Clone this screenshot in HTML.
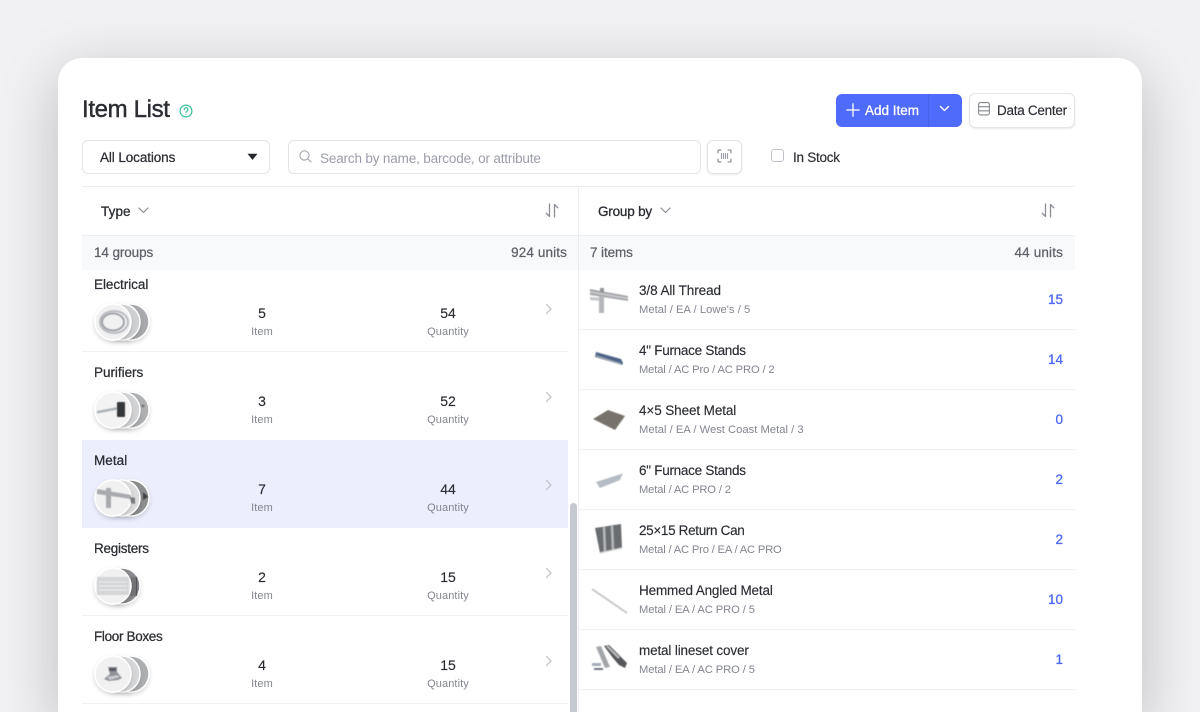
<!DOCTYPE html>
<html lang="en">
<head>
<meta charset="utf-8">
<title>Item List</title>
<style>
html,body{margin:0;padding:0;width:1200px;height:712px;overflow:hidden}
body{background:#f1f1f3;font-family:"Liberation Sans",sans-serif;color:#2b2d33}
#w{position:absolute;left:0;top:0;width:1200px;height:712px;overflow:hidden}
.card{position:absolute;left:58px;top:58px;width:1084px;height:654px;background:#fff;border-radius:24px 24px 0 0;box-shadow:0 16px 60px rgba(0,0,0,.22)}
.a{position:absolute;white-space:nowrap}
.t{position:absolute;white-space:nowrap;line-height:18px;font-size:13.5px;-webkit-text-stroke:.15px currentColor}
.n{font-size:14px}
.c{transform:translateX(-50%)}
.lbl{font-size:11px;color:#83858f;-webkit-text-stroke:0;letter-spacing:.1px}
.sub{font-size:11.2px;color:#83858f;-webkit-text-stroke:0;letter-spacing:-.1px}
.ti{letter-spacing:-.15px}
.num{color:#4d68f5;font-size:13.5px;-webkit-text-stroke:.3px #4d68f5;right:137px}
.sum{color:#5f616b;letter-spacing:-.1px;-webkit-text-stroke:.25px #5f616b;top:244px}
.box{position:absolute;box-sizing:border-box;background:#fff;border:1px solid #e3e4e8;border-radius:6px}
.ln{position:absolute;height:1px;background:#f0f1f3}
svg{position:absolute;overflow:visible}
.ic{fill:none;stroke-linecap:round;stroke-linejoin:round}
</style>
</head>
<body>
<div id="w">
<div class="card"></div>

<div class="t" style="left:82px;top:96px;font-size:24px;line-height:28px;letter-spacing:-.35px;-webkit-text-stroke:.45px #2b2d33">Item List</div>
<svg style="left:179px;top:104px" width="14" height="14" viewBox="0 0 14 14" class="ic" stroke="#3dbf9f" stroke-width="1.2"><circle cx="7" cy="7" r="5.9"/><path d="M5.3 5.6a1.8 1.8 0 1 1 2.6 1.5c-.6.3-.9.6-.9 1.2"/><path d="M7 10.2v.1"/></svg>

<!-- Buttons -->
<div class="a" style="left:836px;top:94px;width:126px;height:33px;background:#4f6bfb;border-radius:6px"></div>
<div class="a" style="left:928px;top:94px;width:1px;height:33px;background:#4661e8"></div>
<svg style="left:846px;top:103px" width="14" height="14" viewBox="0 0 14 14" class="ic" stroke="#fff" stroke-width="1.3"><path d="M7 .8v12.4M.8 7h12.4"/></svg>
<div class="t" style="left:865px;top:102px;color:#fff;-webkit-text-stroke:.3px #fff">Add Item</div>
<svg style="left:939px;top:105px" width="11" height="8" viewBox="0 0 11 8" class="ic" stroke="#fff" stroke-width="1.4"><path d="M1.5 1.5l4 4 4-4"/></svg>

<div class="box" style="left:969px;top:93px;width:106px;height:35px;box-shadow:0 1px 2px rgba(0,0,0,.08)"></div>
<svg style="left:978px;top:102px" width="12" height="14" viewBox="0 0 12 14" class="ic" stroke="#85878f" stroke-width="1.1"><rect x=".6" y=".6" width="10.8" height="12.3" rx="1.8"/><path d="M.6 4.7h10.8M.6 8.8h10.8"/></svg>
<div class="t" style="left:997px;top:102px;letter-spacing:-.27px">Data Center</div>

<!-- Filters -->
<div class="box" style="left:82px;top:140px;width:188px;height:34px"></div>
<div class="t" style="left:100px;top:149px;letter-spacing:-.1px;-webkit-text-stroke:.25px #2b2d33">All Locations</div>
<svg style="left:247px;top:153px" width="11" height="8" viewBox="0 0 11 8"><path d="M.5.8h10L5.9 6.500a.5.5 0 0 1-.8 0z" fill="#26282d"/></svg>

<div class="box" style="left:288px;top:140px;width:413px;height:34px"></div>
<svg style="left:299px;top:150px" width="13" height="13" viewBox="0 0 15 15" class="ic" stroke="#a7a9b2" stroke-width="1.3"><circle cx="6.3" cy="6.3" r="5.3"/><path d="M10.2 10.2l3.6 3.6"/></svg>
<div class="t" style="left:320px;top:150px;color:#9b9daa;letter-spacing:-.16px;-webkit-text-stroke:0">Search by name, barcode, or attribute</div>

<div class="box" style="left:707px;top:140px;width:35px;height:34px;box-shadow:0 1px 2px rgba(0,0,0,.08)"></div>
<svg style="left:717px;top:149px" width="15" height="14" viewBox="0 0 15 14" class="ic" stroke="#777983" stroke-width="1"><path d="M1 4V2a1 1 0 0 1 1-1h2M11 1h2a1 1 0 0 1 1 1v2M14 10v2a1 1 0 0 1-1 1h-2M4 13H2a1 1 0 0 1-1-1v-2"/><path d="M4.5 4.5v5M6.5 4.5v5M8.5 4.5v5M10.5 4.5v5" stroke-width="1.1" stroke="#9a9ca5"/></svg>

<div class="a" style="left:771px;top:149px;width:13px;height:13px;box-sizing:border-box;border:1px solid #bfc1c9;border-radius:3px;background:#fff"></div>
<div class="t" style="left:793px;top:149px;letter-spacing:-.25px">In Stock</div>

<!-- Panels -->
<div class="ln" style="left:82px;top:186px;width:993px;background:#edeef1"></div>
<div class="a" style="left:82px;top:236px;width:993px;height:34px;background:#f8f9fa"></div>
<div class="ln" style="left:82px;top:235px;width:993px;background:#eeeff2"></div>
<div class="a" style="left:578px;top:187px;width:1px;height:525px;background:#ebecef"></div>

<div class="t" style="left:101px;top:203px;letter-spacing:.1px;-webkit-text-stroke:.3px #2b2d33">Type</div>
<svg style="left:138px;top:207px" width="11" height="7" viewBox="0 0 11 7" class="ic" stroke="#8c8e98" stroke-width="1.2"><path d="M1 1l4.5 4.5L10 1"/></svg>
<svg style="left:545px;top:203px" width="14" height="15" viewBox="0 0 14 15" class="ic" stroke="#8a8c95" stroke-width="1.3"><path d="M4.5 1v12.5L1.2 10.2"/><path d="M9.5 14V1.5l3.3 3.3"/></svg>

<div class="t" style="left:598px;top:203px;letter-spacing:-.2px;-webkit-text-stroke:.3px #2b2d33">Group by</div>
<svg style="left:660px;top:207px" width="11" height="7" viewBox="0 0 11 7" class="ic" stroke="#8c8e98" stroke-width="1.2"><path d="M1 1l4.5 4.5L10 1"/></svg>
<svg style="left:1041px;top:203px" width="14" height="15" viewBox="0 0 14 15" class="ic" stroke="#8a8c95" stroke-width="1.3"><path d="M4.5 1v12.5L1.2 10.2"/><path d="M9.5 14V1.5l3.3 3.3"/></svg>

<div class="t sum" style="left:94px">14 groups</div>
<div class="t sum" style="right:633px;letter-spacing:.12px">924 units</div>
<div class="t sum" style="left:590px">7 items</div>
<div class="t sum" style="right:137px;letter-spacing:.15px">44 units</div>

<!-- Left rows -->
<div class="a" style="left:82px;top:440px;width:486px;height:88px;background:#eceefe"></div>
<div class="ln" style="left:82px;top:351px;width:486px"></div>
<div class="ln" style="left:82px;top:615px;width:486px"></div>
<div class="ln" style="left:82px;top:703px;width:486px"></div>
<div class="a" style="left:570px;top:503px;width:7px;height:209px;background:#c7c9d1;border-radius:4px 4px 0 0"></div>

<svg width="1200" height="712" style="left:0;top:0" viewBox="0 0 1200 712">
<defs>
<filter id="sh" x="-30%" y="-30%" width="160%" height="170%"><feDropShadow dx="0" dy="2" stdDeviation="2" flood-color="#000" flood-opacity=".16"/></filter>
<filter id="b" x="-20%" y="-20%" width="140%" height="140%"><feGaussianBlur stdDeviation=".5"/></filter>
</defs>
<!-- Electrical -->
<g filter="url(#sh)"><circle cx="131" cy="322" r="18" fill="#a9aaad" stroke="#fff" stroke-width="1.5"/></g>
<g filter="url(#sh)"><circle cx="122" cy="322" r="18" fill="#d0d1d3" stroke="#fff" stroke-width="1.5"/></g>
<g filter="url(#sh)"><circle cx="113" cy="322" r="18" fill="#f1f1f2" stroke="#fff" stroke-width="1.5"/></g>
<g filter="url(#b)" fill="none" stroke="#9a9ca3" stroke-width="1.8"><ellipse cx="113" cy="322" rx="11" ry="8.5"/><ellipse cx="114" cy="322" rx="14" ry="11" stroke="#b5b7bc"/></g>
<!-- Purifiers -->
<g filter="url(#sh)"><circle cx="131" cy="410" r="18" fill="#b0b1b3" stroke="#fff" stroke-width="1.5"/></g>
<g filter="url(#sh)"><circle cx="122" cy="410" r="18" fill="#d2d3d4" stroke="#fff" stroke-width="1.5"/></g>
<g filter="url(#sh)"><circle cx="113" cy="410" r="18" fill="#f3f3f4" stroke="#fff" stroke-width="1.5"/></g>
<g filter="url(#b)"><path d="M97 411l21-4v2.500l-21 4z" fill="#a9b0b6"/><rect x="117" y="402" width="8" height="15" rx="1" fill="#36373b"/></g>
<circle cx="143" cy="406" r="1.5" fill="#77787b" filter="url(#b)"/>
<!-- Metal -->
<g filter="url(#sh)"><circle cx="131" cy="498" r="18" fill="#8d8e90" stroke="#fff" stroke-width="1.5"/></g>
<path d="M143 492l5 5-5 3z" fill="#3e3f42" filter="url(#b)"/>
<g filter="url(#sh)"><circle cx="122" cy="498" r="18" fill="#dcdcdd" stroke="#fff" stroke-width="1.5"/></g>
<g filter="url(#sh)"><circle cx="113" cy="498" r="18" fill="#f1f1f2" stroke="#fff" stroke-width="1.5"/></g>
<g filter="url(#b)" fill="#a8aaad"><path d="M97 489l34 6v4l-34-5z"/><rect x="106" y="488" width="5" height="20"/><path d="M130 497l5 1v6l-4-1z" fill="#77787c"/></g>
<!-- Registers -->
<g filter="url(#sh)"><circle cx="122" cy="586" r="18" fill="#8a8b8e" stroke="#fff" stroke-width="1.5"/></g>
<g filter="url(#b)"><rect x="130" y="577" width="7" height="19" fill="#3a3b3f"/><path d="M131 577v19M133 577v19M135 577v19" stroke="#c0c0c0" stroke-width=".7"/></g>
<g filter="url(#sh)"><circle cx="113" cy="586" r="18" fill="#f1f1f2" stroke="#fff" stroke-width="1.5"/></g>
<g filter="url(#b)"><rect x="97" y="577" width="32" height="18" rx="1" fill="#d4d5d7"/><path d="M99 582h28M99 586h28M99 590h28" stroke="#eeeeef" stroke-width="1"/></g>
<!-- Floor Boxes -->
<g filter="url(#sh)"><circle cx="131" cy="674" r="18" fill="#adaeb0" stroke="#fff" stroke-width="1.5"/></g>
<g filter="url(#sh)"><circle cx="122" cy="674" r="18" fill="#d6d7d8" stroke="#fff" stroke-width="1.5"/></g>
<g filter="url(#sh)"><circle cx="113" cy="674" r="18" fill="#f1f1f2" stroke="#fff" stroke-width="1.5"/></g>
<g filter="url(#b)"><path d="M108 667h9v5l5 6-4 2-9 1-5-2 6-5z" fill="#8e9096"/><path d="M107 677l10-2 3 2-10 3z" fill="#c9cbd0"/><rect x="109" y="668" width="7" height="3" fill="#56585e"/></g>

<!-- Right thumbnails -->
<g filter="url(#b)">
<path d="M590 289l38 7v5l-38-6z" fill="#a6a8ab"/><path d="M590 292l38 6.500" stroke="#d8d9db" stroke-width="1"/>
<path d="M590 297l12 1v3l-12-1z" fill="#c6c7c9"/>
<path d="M600 288h4v4h-4z" fill="#8f9194"/><path d="M599 296h5v17h-5z" fill="#b4b6b9"/>
<path d="M596 352l25 7 2 4-1 2-27-8z" fill="#4e6488"/><path d="M596 356l25 8" stroke="#a7adb6" stroke-width="1.2"/>
<path d="M593 419l15-9 17 6-10 14z" fill="#77736c"/>
<path d="M596 482l25-8 2-1-3 7-20 8z" fill="#b6bcc3"/>
<path d="M595 528l26-4 1 24-22 5z" fill="#6b6d70"/><path d="M604 527l1 25M612 526l1 24" stroke="#b4b6b9" stroke-width="2.500"/><path d="M600 553l22-5" stroke="#d4d5d7" stroke-width="1.2"/>
<path d="M592 589l35 24" stroke="#c3c5c4" stroke-width="1.7" fill="none"/>
<path d="M596 647l5-1 9 21-5 1z" fill="#a4a7aa"/><path d="M604 646l5-1 18 18-2 5-6-3-6-7z" fill="#55565a"/><path d="M607 646l12 12" stroke="#b9bbbd" stroke-width="2" fill="none"/>
<path d="M592 663h9v3h-9z" fill="#a7adb8"/><path d="M594 668h9v2h-9z" fill="#6f7480"/>
</g>
</svg>

<div class="t ti" style="left:94px;top:276px;letter-spacing:-.05px;-webkit-text-stroke:.25px #2b2d33">Electrical</div>
<div class="t n c" style="left:262px;top:304px">5</div><div class="t c lbl" style="left:262px;top:323px">Item</div>
<div class="t n c" style="left:448px;top:304px">54</div><div class="t c lbl" style="left:448px;top:323px">Quantity</div>

<div class="t ti" style="left:94px;top:364px;letter-spacing:-.03px;-webkit-text-stroke:.25px #2b2d33">Purifiers</div>
<div class="t n c" style="left:262px;top:392px">3</div><div class="t c lbl" style="left:262px;top:411px">Item</div>
<div class="t n c" style="left:448px;top:392px">52</div><div class="t c lbl" style="left:448px;top:411px">Quantity</div>

<div class="t ti" style="left:94px;top:452px;letter-spacing:.05px;-webkit-text-stroke:.25px #2b2d33">Metal</div>
<div class="t n c" style="left:262px;top:480px">7</div><div class="t c lbl" style="left:262px;top:499px">Item</div>
<div class="t n c" style="left:448px;top:480px">44</div><div class="t c lbl" style="left:448px;top:499px">Quantity</div>

<div class="t ti" style="left:94px;top:540px;letter-spacing:-.26px;-webkit-text-stroke:.25px #2b2d33">Registers</div>
<div class="t n c" style="left:262px;top:568px">2</div><div class="t c lbl" style="left:262px;top:587px">Item</div>
<div class="t n c" style="left:448px;top:568px">15</div><div class="t c lbl" style="left:448px;top:587px">Quantity</div>

<div class="t ti" style="left:94px;top:628px;letter-spacing:-.33px;-webkit-text-stroke:.25px #2b2d33">Floor Boxes</div>
<div class="t n c" style="left:262px;top:656px">4</div><div class="t c lbl" style="left:262px;top:675px">Item</div>
<div class="t n c" style="left:448px;top:656px">15</div><div class="t c lbl" style="left:448px;top:675px">Quantity</div>

<svg style="left:545px;top:303px" width="8" height="12" viewBox="0 0 8 12" class="ic" stroke="#c3c5cc" stroke-width="1.3"><path d="M1.500 1.500l4.500 4.500-4.500 4.500"/></svg>
<svg style="left:545px;top:391px" width="8" height="12" viewBox="0 0 8 12" class="ic" stroke="#c3c5cc" stroke-width="1.3"><path d="M1.500 1.500l4.500 4.500-4.500 4.500"/></svg>
<svg style="left:545px;top:479px" width="8" height="12" viewBox="0 0 8 12" class="ic" stroke="#c3c5cc" stroke-width="1.3"><path d="M1.500 1.500l4.500 4.500-4.500 4.500"/></svg>
<svg style="left:545px;top:567px" width="8" height="12" viewBox="0 0 8 12" class="ic" stroke="#c3c5cc" stroke-width="1.3"><path d="M1.500 1.500l4.500 4.500-4.500 4.500"/></svg>
<svg style="left:545px;top:655px" width="8" height="12" viewBox="0 0 8 12" class="ic" stroke="#c3c5cc" stroke-width="1.3"><path d="M1.500 1.500l4.500 4.500-4.500 4.500"/></svg>

<!-- Right rows -->
<div class="ln" style="left:579px;top:329px;width:496px"></div>
<div class="ln" style="left:579px;top:389px;width:496px"></div>
<div class="ln" style="left:579px;top:449px;width:496px"></div>
<div class="ln" style="left:579px;top:509px;width:496px"></div>
<div class="ln" style="left:579px;top:569px;width:496px"></div>
<div class="ln" style="left:579px;top:629px;width:496px"></div>
<div class="ln" style="left:579px;top:689px;width:496px"></div>

<div class="t ti" style="left:639px;top:282px;letter-spacing:-.08px">3/8 All Thread</div><div class="t sub" style="left:639px;top:301px;letter-spacing:.04px">Metal / EA / Lowe's / 5</div><div class="t num" style="top:291px">15</div>
<div class="t ti" style="left:639px;top:342px;letter-spacing:-.27px">4" Furnace Stands</div><div class="t sub" style="left:639px;top:361px;letter-spacing:-.14px">Metal / AC Pro / AC PRO / 2</div><div class="t num" style="top:351px">14</div>
<div class="t ti" style="left:639px;top:402px;letter-spacing:-.1px">4×5 Sheet Metal</div><div class="t sub" style="left:639px;top:421px;letter-spacing:.02px">Metal / EA / West Coast Metal / 3</div><div class="t num" style="top:411px">0</div>
<div class="t ti" style="left:639px;top:462px;letter-spacing:-.27px">6" Furnace Stands</div><div class="t sub" style="left:639px;top:481px;letter-spacing:-.15px">Metal / AC PRO / 2</div><div class="t num" style="top:471px">2</div>
<div class="t ti" style="left:639px;top:522px;letter-spacing:-.33px">25×15 Return Can</div><div class="t sub" style="left:639px;top:541px;letter-spacing:-.17px">Metal / AC Pro / EA / AC PRO</div><div class="t num" style="top:531px">2</div>
<div class="t ti" style="left:639px;top:582px">Hemmed Angled Metal</div><div class="t sub" style="left:639px;top:601px">Metal / EA / AC PRO / 5</div><div class="t num" style="top:591px">10</div>
<div class="t ti" style="left:639px;top:642px">metal lineset cover</div><div class="t sub" style="left:639px;top:661px">Metal / EA / AC PRO / 5</div><div class="t num" style="top:651px">1</div>
</div>
</body>
</html>
